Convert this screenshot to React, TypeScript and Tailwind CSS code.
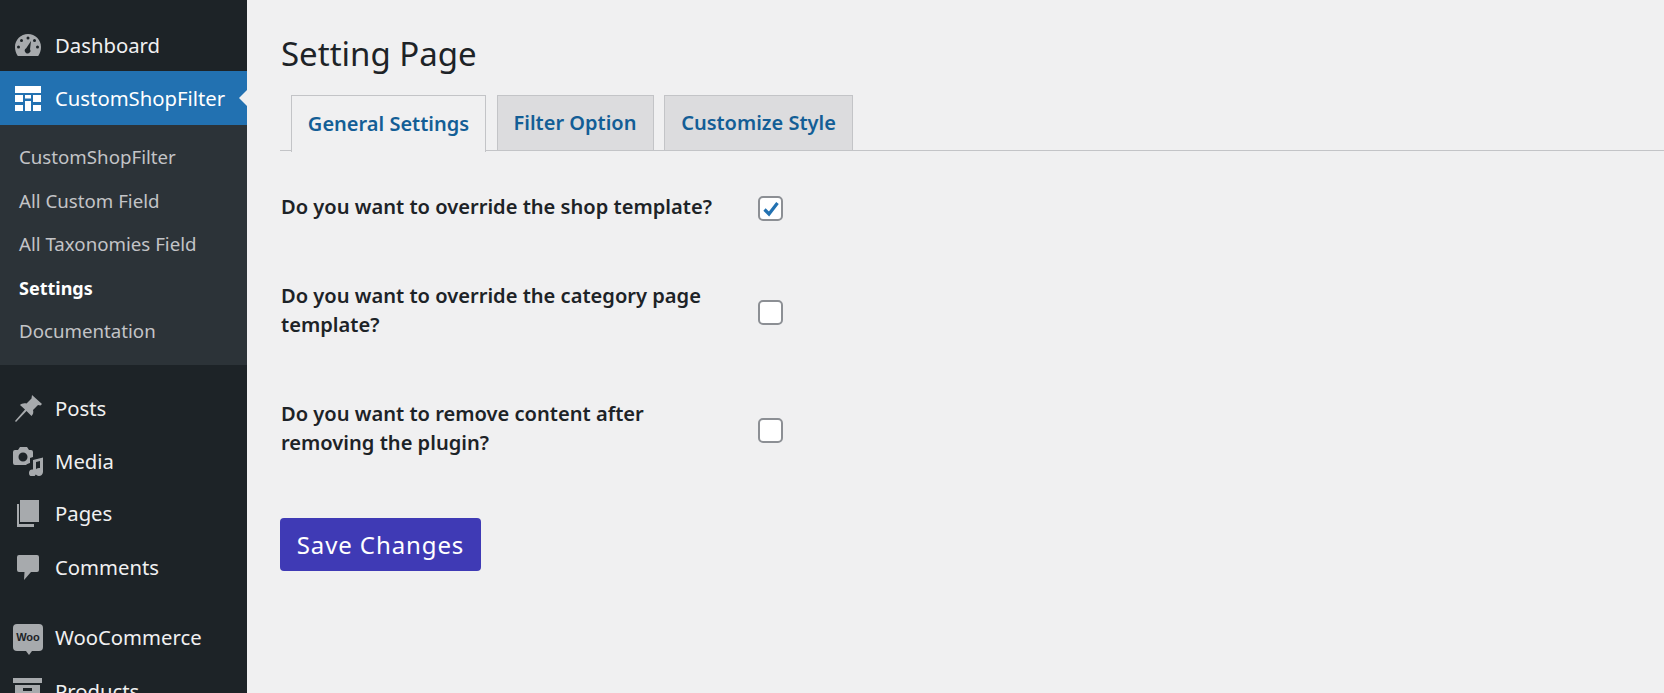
const FONT = "[font-family:'Noto_Sans',sans-serif]";

function Gauge() {
  return (
    <svg viewBox="0 0 26 22" className="w-[26px] h-[22px]">
      <path
        fill="#a7aaad"
        fillRule="evenodd"
        d="M13 0C5.800 0 0 5.800 0 13c0 3.400 1 6.500 2.800 9h20.400C25 19.500 26 16.400 26 13 26 5.800 20.200 0 13 0zM13 2.500a1.500 1.500 0 1 1 0 3 1.500 1.500 0 0 1 0-3zM6.500 5a1.500 1.500 0 1 1 0 3 1.500 1.500 0 0 1 0-3zM19.500 5a1.500 1.500 0 1 1 0 3 1.500 1.500 0 0 1 0-3zM3.500 11.500a1.500 1.500 0 1 1 0 3 1.500 1.500 0 0 1 0-3zM22.500 11.500a1.500 1.500 0 1 1 0 3 1.500 1.500 0 0 1 0-3zM16 7l-1 8.200a2.800 2.800 0 1 1-3.800-1z"
      />
    </svg>
  );
}

function TableIcon() {
  return (
    <svg viewBox="0 0 26 25" className="w-[26px] h-[25px]" fill="#fff">
      <rect x="0" y="0" width="26" height="7" />
      <rect x="0" y="9" width="8" height="7" />
      <rect x="10" y="9" width="6" height="3.500" />
      <rect x="18" y="9" width="8" height="7" />
      <rect x="0" y="19" width="8" height="6" />
      <rect x="10" y="15" width="6" height="10" />
      <rect x="18" y="19" width="8" height="6" />
    </svg>
  );
}

function Pin() {
  return (
    <svg viewBox="0 0 28 27" className="w-[28px] h-[27px]" fill="#a7aaad">
      <path d="M18 0l10 9-1.500 1.500-2.500-.5-5 5c.8 2.500 0 4.500-1.500 6l-5-5L2 27l-1-1L11 14.500 6 10c1.500-1.500 4-2.300 6.500-1.500l5-5z" />
    </svg>
  );
}

function Media() {
  return (
    <svg viewBox="0 0 30 29" className="w-[30px] h-[29px]" fill="#a7aaad">
      <path
        fillRule="evenodd"
        d="M7 0h7l2 3h2a2 2 0 0 1 2 2v5l-3 1v5c-1 0-3 1-4 2H2a2 2 0 0 1-2-2V5a2 2 0 0 1 2-2h3zM10 5.500a4.500 4.500 0 1 0 0 9 4.500 4.500 0 0 0 0-9z"
      />
      <path d="M20 13l10-2.500V25a4 4 0 1 1-3-3.900V14l-4 1V26a3.500 3.500 0 1 1-3-3.500z" />
    </svg>
  );
}

function Pages() {
  return (
    <svg viewBox="0 0 22 27" className="w-[22px] h-[27px]" fill="#a7aaad">
      <path d="M3 0h19v22H3z" />
      <path d="M0 4h2v20h15v3H0z" />
    </svg>
  );
}

function Bubble() {
  return (
    <svg viewBox="0 0 22 25" className="w-[22px] h-[25px]" fill="#a7aaad">
      <path d="M2 0h18a2 2 0 0 1 2 2v13a2 2 0 0 1-2 2h-6l-7 8 .5-8H2a2 2 0 0 1-2-2V2a2 2 0 0 1 2-2z" />
    </svg>
  );
}

function Woo() {
  return (
    <div className="relative w-[30px] h-[27px] rounded-[4px] bg-[#a7aaad] flex items-center justify-center">
      <span className="text-[11px] font-bold leading-none text-[#1d2327] [font-family:'Liberation_Sans',sans-serif]">Woo</span>
      <span className="absolute left-[13px] -bottom-[4px] w-0 h-0 border-x-[3px] border-x-transparent border-t-[4px] border-t-[#a7aaad]" />
    </div>
  );
}

function Box() {
  return (
    <svg viewBox="0 0 30 26" className="w-[30px] h-[26px]" fill="#a7aaad">
      <path fillRule="evenodd" d="M0 0h29v5H0zM2 7h25v19H2zM10 10v3h9v-3z" />
    </svg>
  );
}

function MainItem({ icon, label, className }: { icon: React.ReactNode; label: string; className: string }) {
  return (
    <div className={`flex items-center ${className}`}>
      <span className="w-[55px] pl-[13px] flex items-center shrink-0">{icon}</span>
      <span className="text-[20.300px] leading-none text-[#f0f0f1] whitespace-nowrap">{label}</span>
    </div>
  );
}

function SubItem({ label, active }: { label: string; active?: boolean }) {
  return (
    <div className={`h-[43.500px] pl-[19px] flex items-center leading-none ${active ? "text-[18px] font-bold text-white" : "text-[18.700px] text-[#c3c4c7]"}`}>
      {label}
    </div>
  );
}

function Row({ label, checked, className }: { label: React.ReactNode; checked?: boolean; className: string }) {
  return (
    <div className={`flex items-center ${className}`}>
      <div className="w-[478px] pl-[1px] text-[20.100px] leading-[28.600px] font-semibold text-[#1d2327]">{label}</div>
      <div className="mt-[3px] w-[25px] h-[25px] rounded-[5px] border-2 border-[#8c8f94] bg-white flex items-center justify-center">
        {checked && (
          <svg viewBox="0 0 20 20" className="w-[20px] h-[20px]">
            <path d="M3.500 10.500l4.500 4.500 8.500-11" fill="none" stroke="#2271b1" strokeWidth="3.200" />
          </svg>
        )}
      </div>
    </div>
  );
}

export default function App() {
  return (
    <div className={`flex w-[1664px] h-[693px] overflow-hidden bg-[#f0f0f1] ${FONT}`}>
      <aside className="w-[247px] shrink-0 bg-[#1d2327] pt-[19px] overflow-hidden">
        <MainItem icon={<div className="ml-[2px]"><Gauge /></div>} label="Dashboard" className="h-[52px]" />
        <div className="relative h-[54px] bg-[#2271b1] flex items-center">
          <span className="w-[55px] pl-[15px] shrink-0 flex items-center"><TableIcon /></span>
          <span className="text-[20.300px] leading-none text-white whitespace-nowrap">CustomShopFilter</span>
          <span className="absolute right-0 top-[19px] w-0 h-0 border-y-[8px] border-y-transparent border-r-[8px] border-r-[#f0f0f1]" />
        </div>
        <div className="bg-[#2c3338] h-[240px] pt-[11px]">
          <SubItem label="CustomShopFilter" />
          <SubItem label="All Custom Field" />
          <SubItem label="All Taxonomies Field" />
          <SubItem label="Settings" active />
          <SubItem label="Documentation" />
        </div>
        <div className="pt-[17px]">
          <MainItem icon={<div className="ml-[1px]"><Pin /></div>} label="Posts" className="h-[52px]" />
          <MainItem icon={<Media />} label="Media" className="h-[55px]" />
          <MainItem icon={<div className="ml-[4px]"><Pages /></div>} label="Pages" className="h-[48px]" />
          <MainItem icon={<div className="ml-[4px]"><Bubble /></div>} label="Comments" className="h-[61px] mb-[12px]" />
          <MainItem icon={<Woo />} label="WooCommerce" className="h-[54px]" />
          <MainItem icon={<Box />} label="Products" className="h-[54px]" />
        </div>
      </aside>
      <main className="flex-1 pl-[33px] pt-[31px]">
        <h1 className="pl-[1px] text-[33px] leading-[46px] text-[#1d2327] font-normal">Setting Page</h1>
        <div className="mt-[17px] flex items-end h-[57px] border-b-[1.500px] border-[#c3c4c7] pl-[11px] gap-[10.500px]">
          <div className="w-[195px] h-[57px] -mb-[1.500px] flex items-center justify-center bg-[#f0f0f1] border-[1.500px] border-b-0 border-[#c3c4c7] text-[20px] font-semibold text-[#135e96] whitespace-nowrap">General Settings</div>
          <div className="w-[157px] h-[55px] flex items-center justify-center bg-[#dcdcde] border-[1.500px] border-b-0 border-[#c3c4c7] text-[20px] font-semibold text-[#135e96] whitespace-nowrap">Filter Option</div>
          <div className="w-[189px] h-[55px] flex items-center justify-center bg-[#dcdcde] border-[1.500px] border-b-0 border-[#c3c4c7] text-[20px] font-semibold text-[#135e96] whitespace-nowrap">Customize Style</div>
        </div>
        <Row label="Do you want to override the shop template?" checked className="mt-[36px] h-[40px]" />
        <Row label={<>Do you want to override the category page<br />template?</>} className="mt-[55px] h-[58px]" />
        <Row label={<>Do you want to remove content after<br />removing the plugin?</>} className="mt-[60px] h-[58px]" />
        <button className="mt-[60px] w-[201px] h-[53px] rounded-[4px] bg-[#3f3ab5] text-white text-[24px] tracking-[0.900px]">Save Changes</button>
      </main>
    </div>
  );
}
